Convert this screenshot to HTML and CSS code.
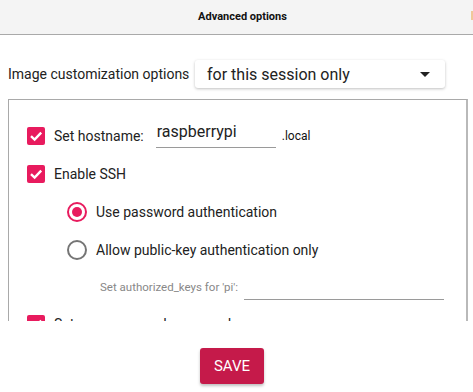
FILE: index.html
```html
<!DOCTYPE html>
<html lang="en">
<head>
    <meta charset="UTF-8">
    <title>Advanced options</title>
    <link rel="stylesheet" href="styles.css">
</head>
<body>
    <header class="titlebar">
        <h1>Advanced options</h1>
        <span class="edge-mark"></span>
    </header>
    <div class="custom-row">
        <span class="custom-label">Image customization options</span>
        <div class="select">
            <span>for this session only</span>
            <span class="select-arrow"></span>
        </div>
    </div>
    <div class="panel">
        <div class="row">
            <span class="checkbox"><svg viewBox="0 0 18 18"><path d="M4 9.2 L7.6 12.6 L14.2 5.6" /></svg></span>
            <span class="label">Set hostname:</span>
            <div class="text-input hostname">raspberrypi</div>
            <span class="suffix">.local</span>
        </div>
        <div class="row">
            <span class="checkbox"><svg viewBox="0 0 18 18"><path d="M4 9.2 L7.6 12.6 L14.2 5.6" /></svg></span>
            <span class="label">Enable SSH</span>
        </div>
        <div class="row sub">
            <span class="radio checked"></span>
            <span class="label">Use password authentication</span>
        </div>
        <div class="row sub">
            <span class="radio"></span>
            <span class="label">Allow public-key authentication only</span>
        </div>
        <div class="row keys">
            <span class="keys-label">Set authorized_keys for 'pi':</span>
            <div class="text-input keys-input"></div>
        </div>
        <div class="row">
            <span class="checkbox"><svg viewBox="0 0 18 18"><path d="M4 9.2 L7.6 12.6 L14.2 5.6" /></svg></span>
            <span class="label">Set username and password</span>
        </div>
    </div>
    <div class="footer">
        <button class="save">SAVE</button>
    </div>
</body>
</html>
```

FILE: styles.css
```css
body {
    margin: 0;
    padding: 0;
    background-color: #ffffff;
    color: #222222;
    font-family: Roboto, "Liberation Sans", sans-serif;
    width: 473px;
    height: 392px;
    overflow: hidden;
}
.titlebar {
    height: 34px;
    background-color: #f4f4f4;
    border-bottom: 1px solid #a9a9a9;
    display: flex;
    align-items: center;
    justify-content: center;
    padding-left: 12px;
    position: relative;
}
.titlebar h1 {
    margin: 0 0 2px 0;
    font-size: 11px;
    font-weight: bold;
    color: #111111;
}
.edge-mark {
    position: absolute;
    right: 0;
    top: 11px;
    width: 2px;
    height: 9px;
    background-color: #f0c89a;
}
.custom-row {
    display: flex;
    align-items: center;
    margin-top: 25px;
    padding-left: 8px;
    height: 28px;
}
.custom-label {
    font-size: 14px;
    width: 187px;
    margin-top: -1px;
}
.select {
    width: 250px;
    height: 28px;
    box-sizing: border-box;
    padding: 0 15px 0 12px;
    display: flex;
    align-items: center;
    justify-content: space-between;
    background-color: #ffffff;
    border-radius: 3px;
    box-shadow: 0 1px 3px rgba(0, 0, 0, 0.25);
    font-size: 16px;
    color: #222222;
}
.select-arrow {
    width: 0;
    height: 0;
    border-left: 5px solid transparent;
    border-right: 5px solid transparent;
    border-top: 5px solid #222222;
}
.panel {
    margin: 11px 5px 0 8px;
    height: 204px;
    padding-top: 17px;
    border-top: 1px solid #a9a9a9;
    border-left: 1px solid #a9a9a9;
    border-right: 2px solid #b9b9b9;
    overflow: hidden;
}
.row {
    display: flex;
    align-items: center;
    height: 38px;
    padding-left: 18px;
    font-size: 14px;
}
.row.keys {
    height: 36px;
}
.row.sub {
    padding-left: 58px;
}
.checkbox {
    width: 18px;
    height: 18px;
    border-radius: 2px;
    background-color: #e81b5e;
    flex-shrink: 0;
    margin-right: 9px;
}
.checkbox svg {
    width: 18px;
    height: 18px;
    display: block;
    fill: none;
    stroke: #ffffff;
    stroke-width: 2.4;
}
.radio {
    width: 16px;
    height: 16px;
    border: 2px solid #757575;
    border-radius: 50%;
    margin-right: 9px;
    flex-shrink: 0;
    position: relative;
}
.radio.checked {
    border-color: #e81b5e;
}
.radio.checked::after {
    content: "";
    position: absolute;
    left: 3px;
    top: 3px;
    width: 10px;
    height: 10px;
    border-radius: 50%;
    background-color: #e81b5e;
}
.text-input {
    height: 25px;
    border-bottom: 1px solid #9a9a9a;
    box-sizing: border-box;
}
.hostname {
    width: 120px;
    margin-left: 12px;
    font-size: 16px;
    line-height: 18px;
    padding-left: 1px;
    margin-bottom: 2px;
}
.suffix {
    font-size: 12px;
    margin-left: 6px;
    color: #111111;
}
.keys-label {
    font-size: 11.5px;
    color: #888888;
    white-space: nowrap;
    padding-left: 73px;
    width: 144px;
}
.keys-input {
    width: 200px;
}
.footer {
    display: flex;
    justify-content: center;
    padding-top: 27px;
}
.save {
    width: 64px;
    height: 36px;
    margin-right: 9px;
    border: none;
    border-radius: 3px;
    background-color: #c51a4a;
    color: #ffffff;
    font-family: Roboto, "Liberation Sans", sans-serif;
    font-size: 15px;
    box-shadow: 0 2px 3px rgba(0, 0, 0, 0.25);
}
```
